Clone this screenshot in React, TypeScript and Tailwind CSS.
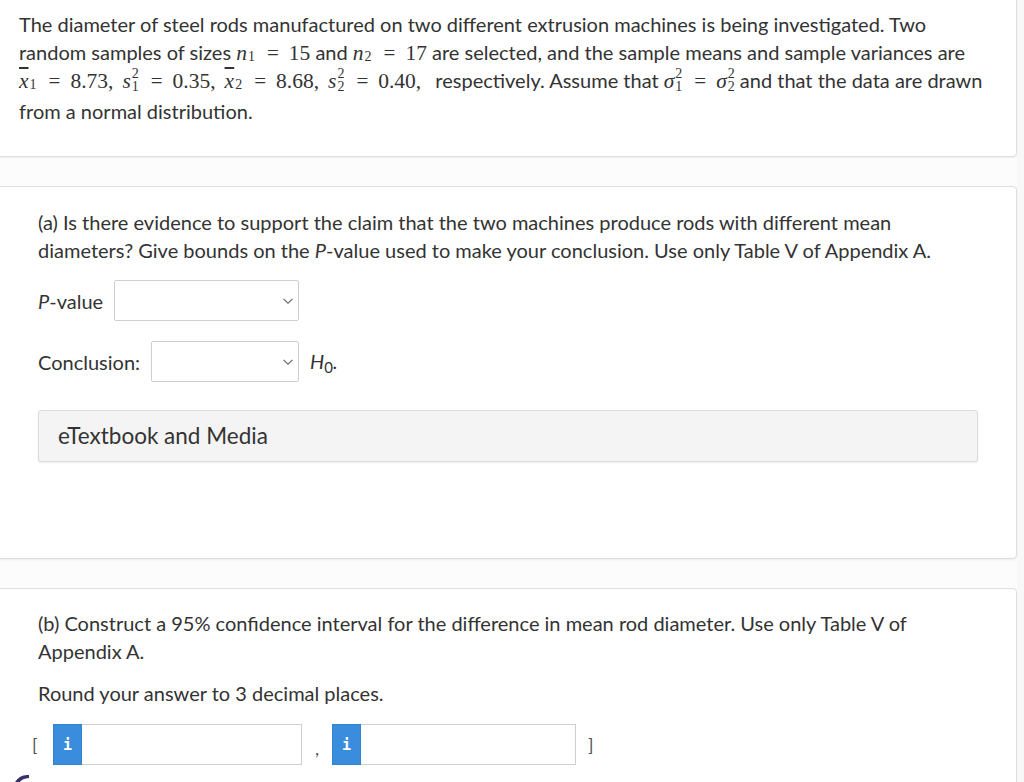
import React from 'react';

const serif = "font-['Liberation_Serif','Times_New_Roman',serif]";

function N({ children, comma }: { children: React.ReactNode; comma?: boolean }) {
  return <span className={`${serif} text-[21.5px] leading-none ${comma ? 'mr-[9px]' : ''}`}>{children}</span>;
}

function Eq() {
  return <span className={`${serif} text-[21px] leading-none mx-[10px]`}>=</span>;
}

// variable with super/subscript, MathJax-ish
function SS({ base, sup, sub, bar }: { base: string; sup?: string; sub: string; bar?: boolean }) {
  return (
    <span className="relative inline-block leading-none mr-[10px]">
      <span className={`${serif} italic text-[21.5px] ${bar ? 'overline' : ''}`}>{base}</span>
      {sup && (
        <span className={`${serif} absolute left-[calc(100%+1px)] top-[-3px] text-[14px] leading-none`}>{sup}</span>
      )}
      <span className={`${serif} absolute left-[calc(100%+1px)] ${sup ? 'top-[10px]' : 'top-[8px]'} text-[14px] leading-none`}>
        {sub}
      </span>
    </span>
  );
}

function Select({ w }: { w: string }) {
  return (
    <div className={`${w} h-[41px] border border-[#cfcfcf] rounded-[2px] bg-white flex items-center justify-end pr-[4px]`}>
      <svg width="12" height="8" viewBox="0 0 12 8" fill="none">
        <path d="M1.5 1.8 L6 6.2 L10.5 1.8" stroke="#666" strokeWidth="1.1" />
      </svg>
    </div>
  );
}

function InfoInput({ w }: { w: string }) {
  return (
    <div className="flex h-[41px]">
      <div className="w-[29px] bg-[#3a8ddd] border border-[#3483cf] flex items-center justify-center">
        <span className="font-['DejaVu_Sans_Mono',monospace] font-bold text-white text-[15px]">i</span>
      </div>
      <div className={`${w} border border-[#cfcfcf] border-l-0 bg-white`} />
    </div>
  );
}

export default function App() {
  return (
    <div className="min-h-[782px] bg-[#f8f8f8] font-['Lato','Open_Sans',sans-serif] text-[#333] overflow-hidden relative">
      <div className="w-[1017px] bg-[#fcfcfc] min-h-[782px] flex flex-col gap-[29px] pb-10">
        {/* intro card */}
        <div className="-ml-px -mt-2 bg-white border border-[#dedede] rounded-br-[4px] shadow-[0_1px_2px_rgba(0,0,0,0.06)] pl-[19px] pr-[10px] pt-[17px] pb-[31px] text-[20px] leading-[28px]">
          <p className="whitespace-nowrap">
            The diameter of steel rods manufactured on two different extrusion machines is being investigated. Two
            <br />
            random samples of sizes <SS base="n" sub="1" />
            <Eq />
            <N>15</N> and <SS base="n" sub="2" />
            <Eq />
            <N>17</N> are selected, and the sample means and sample variances are
            <br />
            <SS base="x" sub="1" bar />
            <Eq />
            <N comma>8.73,</N>
            <SS base="s" sup="2" sub="1" />
            <Eq />
            <N comma>0.35,</N>
            <SS base="x" sub="2" bar />
            <Eq />
            <N comma>8.68,</N>
            <SS base="s" sup="2" sub="2" />
            <Eq />
            <N comma>0.40,</N> respectively. Assume that <SS base="σ" sup="2" sub="1" />
            <Eq />
            <SS base="σ" sup="2" sub="2" />
            <span className="ml-[3px]">and that the data are drawn</span>
            <span className="block mt-[3px]">from a normal distribution.</span>
          </p>
        </div>

        {/* part a */}
        <div className="-ml-px bg-white border border-[#dedede] rounded-r-[4px] shadow-[0_1px_2px_rgba(0,0,0,0.06)] pl-[38px] pr-[38px] pt-[21px] pb-[96px] text-[20px] leading-[28px]">
          <p>
            (a) Is there evidence to support the claim that the two machines produce rods with different mean
            <br />
            diameters? Give bounds on the <i>P</i>-value used to make your conclusion. Use only Table V of Appendix A.
          </p>
          <div className="flex items-center gap-[11px] mt-[16px]">
            <span>
              <i>P</i>-value
            </span>
            <Select w="w-[185px]" />
          </div>
          <div className="flex items-center mt-[20px]">
            <span>Conclusion:</span>
            <div className="ml-[11px]">
              <Select w="w-[148px]" />
            </div>
            <span className="ml-[11px] italic">
              H<span className="text-[15px] relative top-[4px] not-italic">0</span>.
            </span>
          </div>
          <div className="mt-[28px] w-[940px] h-[52px] bg-[#f4f4f4] border border-[#dcdcdc] rounded-[3px] shadow-[0_1px_2px_rgba(0,0,0,0.08)] flex items-center pl-[19px] text-[22.5px]">
            eTextbook and Media
          </div>
        </div>

        {/* part b */}
        <div className="-ml-px bg-white border border-[#dedede] rounded-tr-[4px] pl-[38px] pr-[38px] pt-[20px] pb-10 text-[20px] leading-[28px] min-h-[220px]">
          <p>
            (b) Construct a 95% confidence interval for the difference in mean rod diameter. Use only Table V of
            <br />
            Appendix A.
          </p>
          <p className="mt-[14px]">Round your answer to 3 decimal places.</p>
          <div className="flex items-center mt-[17px] ml-[-6px]">
            <span className="w-[21px] text-[#555] text-[18px]">[</span>
            <InfoInput w="w-[220px]" />
            <span className="w-[30px] text-center text-[#555] text-[18px] relative top-[3px]">,</span>
            <InfoInput w="w-[215px]" />
            <span className="ml-[12px] text-[#555] text-[18px]">]</span>
          </div>
        </div>
      </div>
      <svg className="absolute left-[14px] top-[772px]" width="16" height="12" viewBox="0 0 16 12">
        <path d="M1 10 Q6 2 15 3 L15 6 Q8 6 4 12 Z" fill="#3a2f6b" />
      </svg>
    </div>
  );
}
